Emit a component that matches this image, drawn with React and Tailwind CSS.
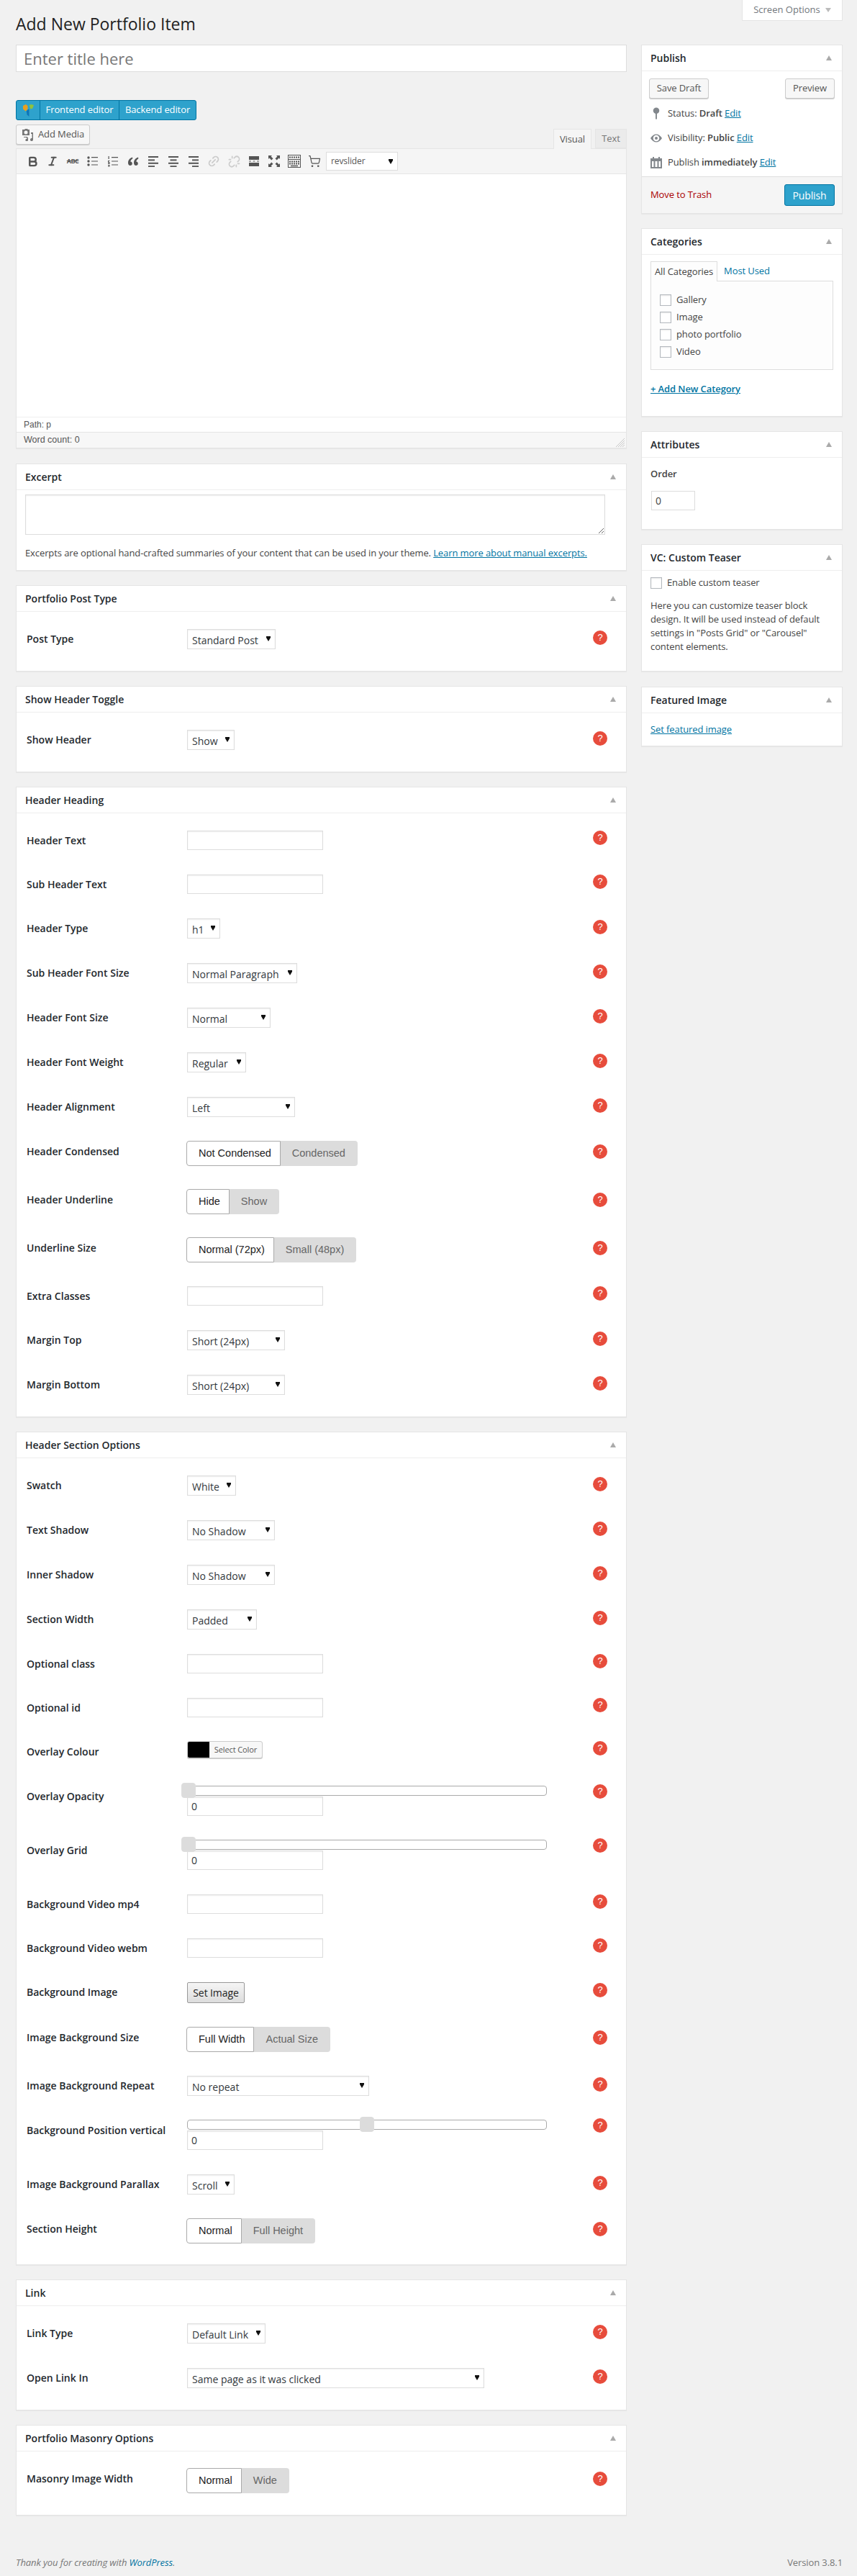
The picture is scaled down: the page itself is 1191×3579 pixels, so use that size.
import { Bold, Italic, Link2, Unlink, ShoppingCart } from "lucide-react";

// small black caret used on all the select boxes
const Caret = ({ className }) => (
  <svg viewBox="0 0 6 7" className={`pointer-events-none absolute h-[7px] w-[6px] ${className}`}>
    <path d="M0 0h6v2L3 7 0 2z" fill="#111" />
  </svg>
);

const Select = ({ value, width }) => (
  <div className={`relative h-[28px] ${width}`}>
    <select
      defaultValue={value}
      className="h-full w-full appearance-none border border-[#ddd] bg-white pl-[6px] pt-[2px] text-[14px] tracking-normal text-[#32373c] shadow-[inset_0_1px_2px_rgba(0,0,0,0.07)] outline-none"
    >
      <option>{value}</option>
    </select>
    <Caret className="right-[7px] top-[10px]" />
  </div>
);

const TextInput = ({ value = "" }) => (
  <input
    type="text"
    defaultValue={value}
    className="block h-[27px] w-[189px] border border-[#ddd] bg-white px-[5px] text-[14px] text-[#32373c] shadow-[inset_0_1px_2px_rgba(0,0,0,0.07)] outline-none"
  />
);

const Toggle = ({ on, off }) => (
  <div className="-ml-px flex h-[35px] font-['Liberation_Sans',sans-serif] text-[14.5px] tracking-normal">
    <span className="flex items-center rounded-l-[4px] border border-[#aaa] bg-white pl-[16px] pr-[12px] text-[#222]">{on}</span>
    <span className="flex items-center rounded-r-[4px] bg-[#dcdcdc] pl-[16px] pr-[17px] text-[#666]">{off}</span>
  </div>
);

const Slider = ({ left }) => (
  <div className="w-[500px]">
    <div className="relative h-[14px] rounded-[4px] border border-[#aaa] bg-white">
      <div className={`absolute top-[-5px] h-[21px] w-[20px] rounded-[4px] border border-[#ddd] bg-[#dcdcdc] ${left}`} />
    </div>
    <div className="mt-px">
      <TextInput value="0" />
    </div>
  </div>
);

const Help = ({ top }) => (
  <div className={`ml-auto flex h-[20px] w-[20px] shrink-0 items-center justify-center rounded-full bg-[#e74c3c] font-['Liberation_Sans',sans-serif] text-[13px] text-white ${top}`}>?</div>
);

const Row = ({ label, gap = "mb-[34px]", icon = "mt-[2px]", labelTop = "", children }) => (
  <div className={`flex items-start ${gap} last:mb-0`}>
    <div className={`w-[223px] shrink-0 text-[14px] font-semibold leading-[28px] tracking-normal text-[#23282d] ${labelTop}`}>{label}</div>
    {children}
    <Help top={icon} />
  </div>
);

const Box = ({ title, children, bottom = "mb-[20px]", body = "" }) => (
  <div className={`border border-[#e5e5e5] bg-white shadow-[0_1px_1px_rgba(0,0,0,0.04)] ${bottom}`}>
    <div className="flex h-[36px] items-center justify-between border-b border-[#eee] pl-[12px] pr-[14px]">
      <h3 className="text-[14px] font-semibold tracking-normal text-[#23282d]">{title}</h3>
      <svg viewBox="0 0 8 7" className="h-[7px] w-[8px]">
        <path d="M4 0l4 7H0z" fill="#aaa" />
      </svg>
    </div>
    <div className={body}>{children}</div>
  </div>
);

const Options = ({ title, children, body = "pb-[30px] pl-[14px] pr-[26px] pt-[24px]" }) => (
  <Box title={title} body={body}>
    {children}
  </Box>
);

const ToolLines = ({ rows }) => (
  <svg viewBox="0 0 16 16" className="h-[16px] w-[16px]" fill="#555">
    {rows.map(([x, w], i) => (
      <rect key={i} x={x} y={1 + i * 4.4} width={w} height="2" />
    ))}
  </svg>
);

const tools = [
  <Bold key="b" size={17} strokeWidth={3.4} color="#555" />,
  <Italic key="i" size={16} strokeWidth={3} color="#555" />,
  <span key="abc" className="text-[9px] font-bold tracking-[-0.5px] text-[#555] line-through">ABC</span>,
  <svg key="ul" viewBox="0 0 16 16" className="h-[16px] w-[16px]" fill="#555">
    <circle cx="2" cy="3" r="1.7" />
    <circle cx="2" cy="8" r="1.7" />
    <circle cx="2" cy="13" r="1.7" />
    <path d="M6 2h9v1.2H6zM6 7.4h9v1.2H6zM6 12.4h9v1.2H6z" />
  </svg>,
  <svg key="ol" viewBox="0 0 16 16" className="h-[16px] w-[16px]" fill="#555">
    <path d="M1.5 1h1.2v4H1.5zM1 7h2.5v1H2v1h1.5v3H1v-1h1.4v-.8H1zM1 13h2.5v2.6H1v-.8h1.5v-.2H1.4v-.7h1.1v-.1H1z" />
    <path d="M6 2h9v1.2H6zM6 7.4h9v1.2H6zM6 12.4h9v1.2H6z" />
  </svg>,
  <svg key="q" viewBox="0 0 16 16" className="h-[16px] w-[16px]" fill="#555">
    <path d="M7 2.5C4 3.4 1 6 1 10.2 1 12.6 2.2 14 4 14c1.5 0 2.8-1.1 2.8-2.8C6.800 9.700 5.800 8.600 4.300 8.500 4.500 6.900 5.600 5.300 7.400 4.200zM15 2.500c-3 .9-6 3.500-6 7.700C9 12.600 10.200 14 12 14c1.500 0 2.800-1.100 2.800-2.800 0-1.500-1-2.600-2.500-2.700.2-1.600 1.300-3.200 3.100-4.300z" />
  </svg>,
  <ToolLines key="l" rows={[[1, 14], [1, 9], [1, 14], [1, 9]]} />,
  <ToolLines key="c" rows={[[1, 14], [3.5, 9], [1, 14], [3.5, 9]]} />,
  <ToolLines key="r" rows={[[1, 14], [6, 9], [1, 14], [6, 9]]} />,
  <Link2 key="lk" size={18} strokeWidth={2.4} color="#ccc" className="-rotate-45" />,
  <Unlink key="ul2" size={17} strokeWidth={2.4} color="#ccc" />,
  <svg key="more" viewBox="0 0 16 16" className="h-[16px] w-[16px]" fill="#555">
    <path d="M1 1h14v5H1zM1 10h14v5H1zM1 7.400h3v1.200H1zM6.500 7.400h3v1.200h-3zM12 7.400h3v1.200h-3z" />
  </svg>,
  <svg key="full" viewBox="0 0 16 16" className="h-[16px] w-[16px]" fill="#555">
    <path d="M0 0h5L3.600 1.400 6.500 4.300 4.300 6.500 1.400 3.600 0 5zM16 0v5l-1.400-1.400-2.900 2.900-2.200-2.200 2.900-2.900L11 0zM0 16v-5l1.400 1.400 2.900-2.900 2.200 2.200-2.900 2.900L5 16zM16 16h-5l1.400-1.400-2.900-2.900 2.200-2.200 2.900 2.900L16 11z" />
  </svg>,
  <svg key="sink" viewBox="0 0 18 18" className="h-[18px] w-[18px]" fill="none" stroke="#555">
    <rect x="0.500" y="0.500" width="17" height="17" />
    <path d="M2 3.500h14" strokeWidth="2" strokeDasharray="2 1" />
    <path d="M0 6.500h18" />
    <path d="M2 9.500h14M2 12.500h14" strokeWidth="2" strokeDasharray="2 1" />
    <path d="M4 15.500h10" strokeWidth="1.500" />
  </svg>,
  <ShoppingCart key="cart" size={18} strokeWidth={1.6} color="#555" />,
];

const categories = ["Gallery", "Image", "photo portfolio", "Video"];

const Check = () => (
  <input type="checkbox" className="h-[16px] w-[16px] appearance-none border border-[#b4b9be] bg-white shadow-[inset_0_1px_2px_rgba(0,0,0,0.1)]" />
);

const SideButton = ({ width, children }) => (
  <button className={`h-[28px] rounded-[3px] border border-[#ccc] bg-[#f7f7f7] text-[13px] text-[#555] shadow-[0_1px_0_#ccc] ${width}`}>{children}</button>
);

const Edit = () => <a className="text-[#0074a2] underline">Edit</a>;

export default function App() {
  return (
    <div className="min-h-[3579px] bg-[#f1f1f1] pl-[22px] pr-[20px] font-['Open_Sans',sans-serif] text-[13px] tracking-[-0.1px] text-[#444]">
      {/* Title bar */}
      <div className="flex h-[62px] items-start justify-between">
        <h1 className="pt-[19px] text-[23px] leading-[29px] tracking-normal text-[#222]">Add New Portfolio Item</h1>
        <div className="flex h-[29px] w-[140px] items-center justify-center gap-[7px] border border-t-0 border-[#e5e5e5] bg-white text-[13px] tracking-normal text-[#72777c]">
          Screen Options
          <svg viewBox="0 0 8 6" className="h-[6px] w-[8px]">
            <path d="M0 0h8L4 6z" fill="#bbb" />
          </svg>
        </div>
      </div>

      <div className="flex items-start gap-[20px]">
        {/* Main column */}
        <div className="w-[849px]">
          <input
            placeholder="Enter title here"
            className="block h-[38px] w-full border border-[#ddd] bg-white px-[10px] text-[22px] tracking-normal text-[#444] outline-none placeholder:text-[#777]"
          />

          <div className="mt-[39px] flex h-[28px] w-[251px] rounded-[3px] border border-[#0074a2] bg-[#2ea2cc] text-[13px] text-white">
            <div className="flex w-[33px] items-center justify-center border-r border-[#0074a2]">
              <svg viewBox="0 0 18 20" className="h-[19px] w-[17px]">
                <path d="M1 3l4-2 3 2v5l-3 3-4-3z" fill="#e8a020" />
                <path d="M10 2l3-1 4 1-2 5-3 1z" fill="#8fc23e" />
                <path d="M6 11l3-3 1 1v10l-3-3z" fill="#0e74b8" />
              </svg>
            </div>
            <div className="flex w-[110px] items-center justify-center border-r border-[#0074a2]">Frontend editor</div>
            <div className="flex flex-1 items-center justify-center">Backend editor</div>
          </div>

          <div className="mt-[6px] flex h-[33px] items-start justify-between">
            <button className="flex h-[28px] w-[103px] items-center gap-[5px] rounded-[3px] border border-[#ccc] bg-[#f7f7f7] pl-[7px] text-[13px] text-[#555] shadow-[0_1px_0_#ccc]">
              <svg viewBox="0 0 18 18" className="h-[18px] w-[18px]" fill="#777">
                <path d="M1 2h3l1-1h3l1 1h2v8H1zM6 3.500a2.500 2.500 0 100 5 2.500 2.500 0 000-5z" />
                <path d="M3 12h5v1H3zM13 6h3v10a2 2 0 11-1.500-1.900V8H13zM6 13.500l3-.8v3.800a1.800 1.800 0 11-1.300-1.700v-1l-.8.200z" />
              </svg>
              Add Media
            </button>
            <div className="relative z-10 mt-[6px] flex">
              <div className="flex h-[28px] w-[53px] items-center justify-center border border-b-0 border-[#e5e5e5] bg-[#f5f5f5] text-[#555]">Visual</div>
              <div className="ml-[5px] flex h-[27px] w-[44px] items-center justify-center border border-[#e5e5e5] bg-[#ebebeb] text-[#777]">Text</div>
            </div>
          </div>

          {/* Editor */}
          <div className="mb-[21px] border border-[#e5e5e5] bg-white shadow-[0_1px_1px_rgba(0,0,0,0.04)]">
            <div className="flex h-[35px] items-center border-b border-[#e5e5e5] bg-[#f5f5f5] pl-[8px]">
              {tools.map((tool) => (
                <div key={tool.key} className="flex w-[28px] items-center justify-center">
                  {tool}
                </div>
              ))}
              <div className="relative ml-[2px] h-[26px] w-[100px]">
                <select defaultValue="revslider" className="h-full w-full appearance-none border border-[#ddd] bg-white pl-[6px] text-[12px] text-[#555] outline-none">
                  <option>revslider</option>
                </select>
                <Caret className="right-[7px] top-[10px]" />
              </div>
            </div>
            <div className="h-[337px]" />
            <div className="flex h-[21px] items-center border-t border-[#eee] pl-[10px] font-['Liberation_Sans',sans-serif] text-[12px] tracking-normal text-[#555]">Path: p</div>
            <div className="relative flex h-[22px] items-center border-t border-[#e5e5e5] bg-[#f7f7f7] pl-[10px] font-['Liberation_Sans',sans-serif] text-[12.5px] tracking-normal text-[#555]">
              Word count: 0
              <svg viewBox="0 0 12 12" className="absolute bottom-[1px] right-[2px] h-[12px] w-[12px]" stroke="#bbb" strokeWidth="0.800">
                <path d="M12 0L0 12M12 3L3 12M12 6L6 12M12 9L9 12" />
              </svg>
            </div>
          </div>

          <Box title="Excerpt" body="pb-[14px] pl-[12px] pr-[29px] pt-[6px]">
            <textarea className="block h-[56px] w-full resize-y border border-[#ddd] bg-white shadow-[inset_0_1px_2px_rgba(0,0,0,0.07)] outline-none" />
            <p className="mt-[16px] text-[13px] leading-[19px] text-[#444]">
              Excerpts are optional hand-crafted summaries of your content that can be used in your theme.{" "}
              <a className="text-[#0074a2] underline">Learn more about manual excerpts.</a>
            </p>
          </Box>

          <Options title="Portfolio Post Type">
            <Row label="Post Type">
              <Select value="Standard Post" width="w-[123px]" />
            </Row>
          </Options>

          <Options title="Show Header Toggle">
            <Row label="Show Header">
              <Select value="Show" width="w-[66px]" />
            </Row>
          </Options>

          <Options title="Header Heading">
            <Row label="Header Text" gap="mb-[33px]" icon="mt-0">
              <TextInput />
            </Row>
            <Row label="Sub Header Text" gap="mb-[33px]" icon="mt-0">
              <TextInput />
            </Row>
            <Row label="Header Type">
              <Select value="h1" width="w-[46px]" />
            </Row>
            <Row label="Sub Header Font Size">
              <Select value="Normal Paragraph" width="w-[153px]" />
            </Row>
            <Row label="Header Font Size">
              <Select value="Normal" width="w-[116px]" />
            </Row>
            <Row label="Header Font Weight">
              <Select value="Regular" width="w-[82px]" />
            </Row>
            <Row label="Header Alignment" gap="mb-[33px]">
              <Select value="Left" width="w-[150px]" />
            </Row>
            <Row label="Header Condensed" gap="mb-[32px]" icon="mt-[5px]" labelTop="mt-px">
              <Toggle on="Not Condensed" off="Condensed" />
            </Row>
            <Row label="Header Underline" gap="mb-[32px]" icon="mt-[5px]" labelTop="mt-px">
              <Toggle on="Hide" off="Show" />
            </Row>
            <Row label="Underline Size" gap="mb-[33px]" icon="mt-[5px]" labelTop="mt-px">
              <Toggle on="Normal (72px)" off="Small (48px)" />
            </Row>
            <Row label="Extra Classes" gap="mb-[33px]" icon="mt-0">
              <TextInput />
            </Row>
            <Row label="Margin Top">
              <Select value="Short (24px)" width="w-[136px]" />
            </Row>
            <Row label="Margin Bottom">
              <Select value="Short (24px)" width="w-[136px]" />
            </Row>
          </Options>

          <Options title="Header Section Options" body="pb-[29px] pl-[14px] pr-[26px] pt-[24px]">
            <Row label="Swatch">
              <Select value="White" width="w-[68px]" />
            </Row>
            <Row label="Text Shadow">
              <Select value="No Shadow" width="w-[122px]" />
            </Row>
            <Row label="Inner Shadow">
              <Select value="No Shadow" width="w-[122px]" />
            </Row>
            <Row label="Section Width">
              <Select value="Padded" width="w-[97px]" />
            </Row>
            <Row label="Optional class" gap="mb-[33px]" icon="mt-0">
              <TextInput />
            </Row>
            <Row label="Optional id" gap="mb-[32px]" icon="mt-0">
              <TextInput />
            </Row>
            <Row label="Overlay Colour" gap="mb-[33px]" icon="mt-0" labelTop="mt-px">
              <div className="flex h-[24px] w-[105px] overflow-hidden rounded-[3px] border border-[#ccc] bg-[#f7f7f7] shadow-[0_1px_0_#ccc]">
                <span className="w-[30px] bg-black" />
                <span className="flex flex-1 items-center justify-center text-[11px] text-[#555]">Select Color</span>
              </div>
            </Row>
            <Row label="Overlay Opacity" gap="mb-[33px]" icon="-mt-[2px]" labelTop="mt-px">
              <Slider left="-left-[9px]" />
            </Row>
            <Row label="Overlay Grid" icon="-mt-[2px]" labelTop="mt-px">
              <Slider left="-left-[9px]" />
            </Row>
            <Row label="Background Video mp4" gap="mb-[33px]" icon="mt-0">
              <TextInput />
            </Row>
            <Row label="Background Video webm" gap="mb-[33px]" icon="mt-0">
              <TextInput />
            </Row>
            <Row label="Background Image" gap="mb-[33px]" icon="mt-px">
              <button className="h-[29px] w-[80px] rounded-[2px] border border-[#999] bg-gradient-to-b from-[#f5f5f5] to-[#ddd] text-[14px] text-[#222]">Set Image</button>
            </Row>
            <Row label="Image Background Size" gap="mb-[33px]" icon="mt-[5px]" labelTop="mt-px">
              <Toggle on="Full Width" off="Actual Size" />
            </Row>
            <Row label="Image Background Repeat" gap="mb-[33px]">
              <Select value="No repeat" width="w-[253px]" />
            </Row>
            <Row label="Background Position vertical" icon="-mt-[2px]" labelTop="mt-px">
              <Slider left="left-[239px]" />
            </Row>
            <Row label="Image Background Parallax" gap="mb-[33px]">
              <Select value="Scroll" width="w-[66px]" />
            </Row>
            <Row label="Section Height" icon="mt-[5px]" labelTop="mt-px">
              <Toggle on="Normal" off="Full Height" />
            </Row>
          </Options>

          <Options title="Link">
            <Row label="Link Type">
              <Select value="Default Link" width="w-[109px]" />
            </Row>
            <Row label="Open Link In">
              <Select value="Same page as it was clicked" width="w-[413px]" />
            </Row>
          </Options>

          <Options title="Portfolio Masonry Options" body="pb-[30px] pl-[14px] pr-[26px] pt-[23px]">
            <Row label="Masonry Image Width" icon="mt-[5px]" labelTop="mt-px">
              <Toggle on="Normal" off="Wide" />
            </Row>
          </Options>
        </div>

        {/* Sidebar */}
        <div className="w-[280px]">
          <Box title="Publish">
            <div className="flex justify-between px-[10px] pt-[10px]">
              <SideButton width="w-[83px]">Save Draft</SideButton>
              <SideButton width="w-[69px]">Preview</SideButton>
            </div>
            <div className="flex flex-col gap-[15px] pb-[10px] pl-[12px] pt-[11px] leading-[19px]">
              <div className="flex items-center gap-[8px]">
                <svg viewBox="0 0 16 18" className="h-[17px] w-[16px]" fill="#82878c">
                  <circle cx="8" cy="5" r="4.500" />
                  <rect x="7" y="8" width="2" height="9.500" />
                </svg>
                <span>
                  Status: <b className="font-semibold">Draft</b> <Edit />
                </span>
              </div>
              <div className="flex items-center gap-[8px]">
                <svg viewBox="0 0 16 12" className="h-[12px] w-[16px]" fill="#82878c" fillRule="evenodd">
                  <path d="M0 6c2-3.500 5-5.500 8-5.500S14 2.500 16 6c-2 3.500-5 5.500-8 5.500S2 9.500 0 6zm8-4.300a4.300 4.300 0 100 8.600 4.300 4.300 0 000-8.600zM8 4a2 2 0 100 4 2 2 0 000-4z" />
                </svg>
                <span>
                  Visibility: <b className="font-semibold">Public</b> <Edit />
                </span>
              </div>
              <div className="flex items-center gap-[8px]">
                <svg viewBox="0 0 16 16" className="h-[16px] w-[16px]" fill="#82878c" fillRule="evenodd">
                  <path d="M0 2h3V0h2v2h6V0h2v2h3v14H0zM2 6v8h2.500V6zm4.500 0v8h3V6zm5 0v8H14V6z" />
                </svg>
                <span>
                  Publish <b className="font-semibold">immediately</b> <Edit />
                </span>
              </div>
            </div>
            <div className="flex h-[51px] items-center justify-between border-t border-[#ddd] bg-[#f5f5f5] pl-[12px] pr-[10px]">
              <a className="text-[#a00]">Move to Trash</a>
              <button className="h-[30px] w-[70px] rounded-[3px] border border-[#0074a2] bg-[#2ea2cc] text-[14px] text-white">Publish</button>
            </div>
          </Box>

          <Box title="Categories" body="px-[12px] pt-[9px] pb-[28px]">
            <div className="flex">
              <div className="relative z-10 -mb-px flex h-[28px] items-center border border-b-0 border-[#ddd] bg-[#fdfdfd] px-[5px]">All Categories</div>
              <a className="ml-[9px] flex items-center text-[#0074a2]">Most Used</a>
            </div>
            <div className="flex h-[124px] flex-col gap-[8px] border border-[#ddd] bg-[#fdfdfd] pl-[12px] pt-[18px]">
              {categories.map((name) => (
                <label key={name} className="flex h-[16px] items-center gap-[7px]">
                  <Check />
                  {name}
                </label>
              ))}
            </div>
            <a className="mt-[17px] block font-semibold leading-[19px] text-[#0074a2] underline">+ Add New Category</a>
          </Box>

          <Box title="Attributes" body="px-[12px] pt-[13px] pb-[26px]">
            <div className="font-semibold leading-[19px]">Order</div>
            <input defaultValue="0" className="ml-px mt-[14px] block h-[27px] w-[61px] border border-[#ddd] bg-white px-[5px] text-[14px] outline-none" />
          </Box>

          <Box title="VC: Custom Teaser" body="px-[12px] pt-[9px] pb-[24px]" bottom="mb-[21px]">
            <label className="flex h-[16px] items-center gap-[7px]">
              <Check />
              Enable custom teaser
            </label>
            <p className="mt-[14px] leading-[19px]">Here you can customize teaser block design. It will be used instead of default settings in "Posts Grid" or "Carousel" content elements.</p>
          </Box>

          <Box title="Featured Image" body="px-[12px] pt-[13px] pb-[13px]">
            <a className="block leading-[19px] text-[#0074a2] underline">Set featured image</a>
          </Box>
        </div>
      </div>

      {/* Footer */}
      <div className="mt-[36px] flex items-center justify-between leading-[19px] text-[#777]">
        <span className="italic">
          Thank you for creating with <a className="text-[#0074a2]">WordPress</a>.
        </span>
        <span>Version 3.8.1</span>
      </div>
    </div>
  );
}
